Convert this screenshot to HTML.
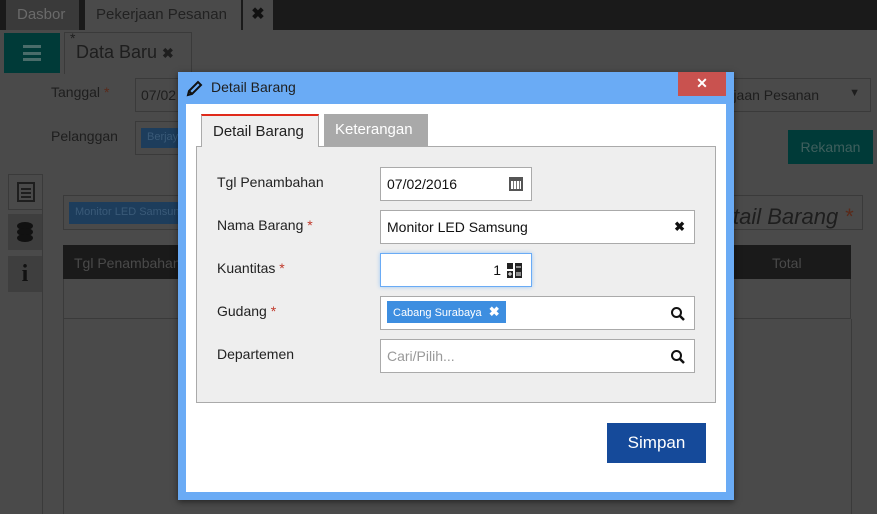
<!DOCTYPE html>
<html style="overflow:hidden;width:877px;height:514px"><head><style>
*{margin:0;padding:0;box-sizing:border-box}
body{width:877px;height:514px;overflow:hidden;background:#4a4a4a;font-family:"Liberation Sans",sans-serif;position:relative;font-size:14px}
.a{position:absolute;white-space:nowrap}
.t{color:#1e1e1e}
.lbl{position:absolute;left:217px;font-size:14px;color:#222}
.req{color:#c0392b}
.inp{position:absolute;left:380px;width:315px;height:34px;background:#fff;border:1px solid #aaa;font-size:14px;padding:0 6px;line-height:32px;color:#111}
</style></head><body>
<div class="a" style="left:0;top:0;width:877px;height:30px;background:#1a1a1a"></div>
<div class="a" style="left:6px;top:0;width:73px;height:30px;background:#3a3a3a;color:#6a6a6a;font-size:15px;line-height:30px;padding-left:11px">Dasbor</div>
<div class="a" style="left:85px;top:0;width:156px;height:30px;background:#4a4a4a;color:#222;font-size:15px;line-height:30px;padding-left:11px">Pekerjaan Pesanan</div>
<div class="a" style="left:243px;top:0;width:30px;height:30px;background:#4a4a4a;color:#111;font-size:16px;line-height:30px;text-align:center;font-weight:bold">✖</div>
<div class="a" style="left:4px;top:33px;width:56px;height:40px;background:#003a38"></div>
<div class="a" style="left:23px;top:45px;width:18px;height:16px;border-top:3px solid #4a6c6a;border-bottom:3px solid #4a6c6a"></div>
<div class="a" style="left:23px;top:52px;width:18px;height:3px;background:#4a6c6a"></div>
<div class="a" style="left:64px;top:32px;width:128px;height:42px;border:1px solid #3a3a3a;border-bottom:none"></div>
<div class="a t" style="left:70px;top:30px;font-size:14px">*</div>
<div class="a t" style="left:76px;top:42px;font-size:18px">Data Baru <span style="font-size:14px;font-weight:bold">✖</span></div>
<div class="a t" style="left:51px;top:84px;font-size:14px">Tanggal <span style="color:#5a2a1a">*</span></div>
<div class="a" style="left:135px;top:78px;width:50px;height:34px;border:1px solid #3a3a3a;color:#1e1e1e;padding:8px 5px">07/02</div>
<div class="a t" style="left:51px;top:128px;font-size:14px">Pelanggan</div>
<div class="a" style="left:135px;top:121px;width:50px;height:34px;border:1px solid #3a3a3a"></div>
<div class="a" style="left:141px;top:128px;width:45px;height:20px;background:#1d3d5c;color:#3a5a78;font-size:11px;padding:3px 6px;overflow:hidden">Berjaya</div>
<div class="a" style="left:700px;top:78px;width:171px;height:34px;border:1px solid #3a3a3a;color:#1e1e1e;padding:8px 20px">erjaan Pesanan <span style="position:absolute;right:10px;font-size:11px">▼</span></div>
<div class="a" style="left:788px;top:130px;width:85px;height:34px;background:#003a38;color:#3f5f5d;font-size:14px;line-height:34px;text-align:center">Rekaman</div>
<div class="a" style="left:42px;top:174px;width:1px;height:340px;background:#3a3a3a"></div>
<div class="a" style="left:8px;top:174px;width:35px;height:36px;border:1px solid #3a3a3a;border-right:none"></div>
<div class="a" style="left:17px;top:182px;width:18px;height:20px;border:2px solid #1e1e1e;background:repeating-linear-gradient(180deg,transparent 0 2px,#1e1e1e 2px 4px) content-box;padding:2px"></div>
<div class="a" style="left:8px;top:214px;width:34px;height:36px;background:#3e3e3e"></div>
<svg class="a" style="left:15px;top:221px" width="20" height="22"><ellipse cx="10" cy="5" rx="8" ry="4" fill="#111"/><ellipse cx="10" cy="11" rx="8" ry="4" fill="#111"/><ellipse cx="10" cy="17" rx="8" ry="4" fill="#111"/></svg>
<div class="a" style="left:8px;top:256px;width:34px;height:36px;background:#3e3e3e;color:#111;text-align:center;font-size:24px;line-height:36px;font-weight:bold;font-family:'Liberation Serif',serif">i</div>
<div class="a" style="left:63px;top:195px;width:800px;height:35px;border:1px solid #3a3a3a"></div>
<div class="a" style="left:69px;top:202px;width:112px;height:22px;background:#1d3d5c;color:#3a5a78;font-size:11px;padding:4px 6px;overflow:hidden">Monitor LED Samsung</div>
<div class="a" style="left:733px;top:204px;color:#1e1e1e;font-size:22px;font-style:italic">tail Barang <span style="color:#5a2a1a">*</span></div>
<div class="a" style="left:63px;top:245px;width:788px;height:34px;background:#1a1a1a"></div>
<div class="a" style="left:74px;top:255px;color:#4a4a4a;font-size:14px">Tgl Penambahan</div>
<div class="a" style="left:772px;top:255px;color:#4a4a4a;font-size:14px">Total</div>
<div class="a" style="left:63px;top:279px;width:788px;height:40px;border:1px solid #3a3a3a;border-top:none"></div>
<div class="a" style="left:63px;top:319px;width:1px;height:195px;background:#3a3a3a"></div>
<div class="a" style="left:851px;top:319px;width:1px;height:195px;background:#3a3a3a"></div>
<div class="a" style="left:178px;top:72px;width:556px;height:428px;background:#6aabf5;box-shadow:0 2px 6px rgba(0,0,0,.5)"></div>
<div class="a" style="left:678px;top:72px;width:48px;height:24px;background:#c9524f;color:#fff;text-align:center;line-height:22px;font-size:14px;font-weight:bold">✕</div>
<svg class="a" style="left:186px;top:79px" width="18" height="18" viewBox="0 0 18 18"><path d="M2 16 L3 12 L12 3 L15 6 L6 15 Z M3 12 L6 15" fill="none" stroke="#111" stroke-width="2"/></svg>
<div class="a t" style="left:211px;top:79px;font-size:14px">Detail Barang</div>
<div class="a" style="left:186px;top:104px;width:540px;height:388px;background:#fff"></div>
<div class="a" style="left:196px;top:146px;width:520px;height:257px;background:#eee;border:1px solid #aaa"></div>
<div class="a" style="left:201px;top:114px;width:118px;height:33px;background:#eee;border:1px solid #aaa;border-top:2px solid #e02a1a;border-bottom:none;color:#222;font-size:15px;padding:7px 11px">Detail Barang</div>
<div class="a" style="left:324px;top:114px;width:104px;height:32px;background:#a9a9a9;color:#fff;font-size:15px;padding:7px 11px">Keterangan</div>
<div class="lbl" style="top:174px">Tgl Penambahan</div>
<div class="lbl" style="top:217px">Nama Barang <span class="req">*</span></div>
<div class="lbl" style="top:260px">Kuantitas <span class="req">*</span></div>
<div class="lbl" style="top:303px">Gudang <span class="req">*</span></div>
<div class="lbl" style="top:346px">Departemen</div>
<div class="inp" style="top:167px;width:152px">07/02/2016<span style="position:absolute;right:8px;top:9px;width:14px;height:14px;border:2px solid #555;border-top:4px solid #555;background:repeating-linear-gradient(90deg,#fff 0 2px,#777 2px 3px)"></span></div>
<div class="inp" style="top:210px">Monitor LED Samsung<span style="position:absolute;right:9px;font-weight:bold;font-size:13px">✖</span></div>
<div class="inp" style="top:253px;width:152px;border-color:#6aabf5;box-shadow:0 0 4px #9cc8f5;text-align:right;padding-right:30px">1<svg style="position:absolute;right:9px;top:9px" width="15" height="15"><rect x="0" y="0" width="6" height="6" fill="#222"/><rect x="0" y="8" width="6" height="7" fill="#222"/><rect x="8" y="0" width="7" height="15" fill="#222"/><path d="M9 4h5M9 10h5M9 12h5M1 11h4M3 9v4" stroke="#fff" stroke-width="1"/></svg></div>
<div class="inp" style="top:296px"><span style="display:inline-block;margin-top:4px;vertical-align:top;background:#3d8ee0;color:#fff;font-size:11px;height:22px;line-height:22px;padding:0 6px">Cabang Surabaya <b style="font-size:13px;margin-left:4px">✖</b></span><svg style="position:absolute;right:8px;top:9px" width="16" height="16"><circle cx="6.5" cy="6.5" r="4.5" fill="none" stroke="#111" stroke-width="2"/><path d="M10 10 L14 14" stroke="#111" stroke-width="2.5"/></svg></div>
<div class="inp" style="top:339px;color:#999">Cari/Pilih...<svg style="position:absolute;right:8px;top:9px" width="16" height="16"><circle cx="6.5" cy="6.5" r="4.5" fill="none" stroke="#111" stroke-width="2"/><path d="M10 10 L14 14" stroke="#111" stroke-width="2.5"/></svg></div>
<div class="a" style="left:607px;top:423px;width:99px;height:40px;background:#154a9a;color:#fff;font-size:17px;line-height:40px;text-align:center">Simpan</div>
</body></html>
